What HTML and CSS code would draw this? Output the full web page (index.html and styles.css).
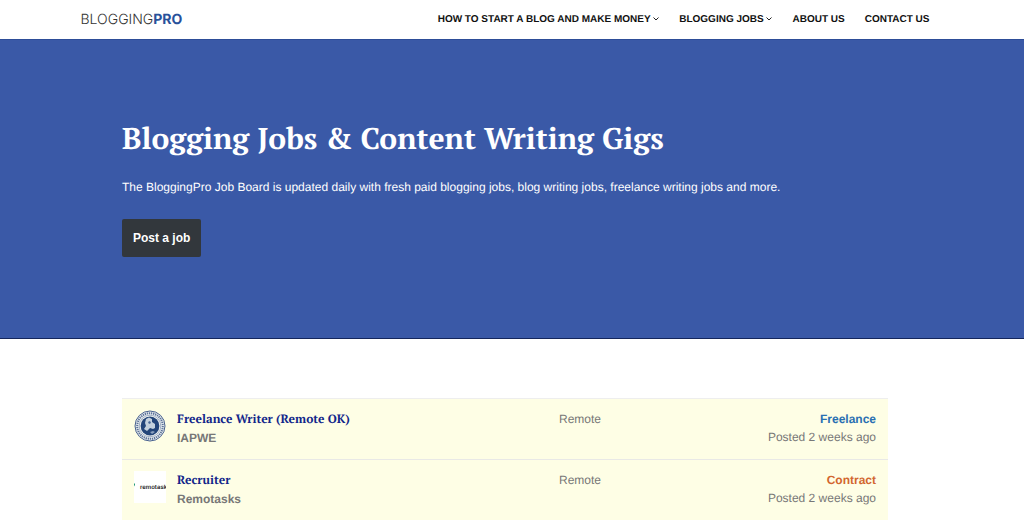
FILE: index.html
```html
<!DOCTYPE html>
<html lang="en">

<head>
    <meta charset="UTF-8">
    <meta name="viewport" content="width=device-width, initial-scale=1.0">
    <title>Blogging Jobs &amp; Content Writing Gigs</title>
    <link rel="stylesheet" href="styles.css">
</head>

<body>
    <header class="site-header">
        <div class="header-inner">
            <a href="#" class="logo">BLOGGING<strong>PRO</strong></a>
            <nav class="main-nav">
                <a href="#">HOW TO START A BLOG AND MAKE MONEY
                    <svg class="arrow" viewBox="0 0 6 4"><path d="M0.5 0.5 L3 3 L5.5 0.5" /></svg></a>
                <a href="#">BLOGGING JOBS
                    <svg class="arrow" viewBox="0 0 6 4"><path d="M0.5 0.5 L3 3 L5.5 0.5" /></svg></a>
                <a href="#">ABOUT US</a>
                <a href="#">CONTACT US</a>
            </nav>
        </div>
    </header>

    <section class="hero">
        <div class="container">
            <h1>Blogging Jobs &amp; Content Writing Gigs</h1>
            <p>The BloggingPro Job Board is updated daily with fresh paid blogging jobs, blog writing jobs, freelance writing jobs and more.</p>
            <button type="button" class="post-btn">Post a job</button>
        </div>
    </section>

    <main class="jobs">
        <ul class="job-list container">
            <li class="job">
                <!-- IAPWE globe seal -->
                <svg class="job-logo" viewBox="0 0 32 32">
                    <circle cx="16" cy="16" r="15" fill="#e9eef0" stroke="#48618e" />
                    <circle cx="16" cy="16" r="12.8" fill="none" stroke="#5d7399" stroke-width="2" stroke-dasharray="1.3 0.8" />
                    <circle cx="16" cy="16" r="10.8" fill="#f2f5f3" stroke="#6f83a6" stroke-width="0.6" />
                    <circle cx="16" cy="16" r="9.4" fill="#234579" />
                    <path d="M12 9 L15 7.5 L18 9 L18 12 L21 14 L21 18 L19 19 L16 18 L13 21 L10 19 L12 16 L11 13 Z" fill="#c4d1dd" />
                    <path d="M14 12 L16 11 L17 13 L15 14 Z" fill="#4a6896" />
                    <path d="M16 22 L19 21 L21 22 L18 24 Z" fill="#8ba0bd" />
                </svg>
                <div class="position">
                    <h3><a href="#">Freelance Writer (Remote OK)</a></h3>
                    <strong>IAPWE</strong>
                </div>
                <div class="location">Remote</div>
                <div class="meta">
                    <div class="type freelance">Freelance</div>
                    <div>Posted 2 weeks ago</div>
                </div>
            </li>
            <li class="job">
                <svg class="job-logo" viewBox="0 0 32 32">
                    <rect width="32" height="32" fill="#fff" />
                    <path d="M0 12.5 H1 V14 L0 15.5 Z" fill="#269b79" />
                    <text class="logo-text" x="6" y="18">remotask</text>
                </svg>
                <div class="position">
                    <h3><a href="#">Recruiter</a></h3>
                    <strong>Remotasks</strong>
                </div>
                <div class="location">Remote</div>
                <div class="meta">
                    <div class="type contract">Contract</div>
                    <div>Posted 2 weeks ago</div>
                </div>
            </li>
        </ul>
    </main>
</body>

</html>
```
FILE: styles.css
```css
* {
    box-sizing: border-box;
}

body {
    margin: 0;
    font-family: "Liberation Sans", Arial, sans-serif;
    font-size: 12px;
    line-height: 18px;
    text-rendering: geometricPrecision;
    color: #777;
    background-color: #fff;
}

a {
    text-decoration: none;
}

/* header */
.site-header {
    padding-right: 14px;
}

.header-inner {
    display: flex;
    align-items: center;
    justify-content: space-between;
    max-width: 849px;
    height: 39px;
    padding-top: 1px;
    margin: 0 auto;
}

.logo {
    font-family: Inter, sans-serif;
    font-size: 14px;
    font-weight: 300;
    color: #333;
}

.logo strong {
    font-weight: 700;
    color: #28519b;
}

.main-nav {
    display: flex;
    gap: 20px;
}

.main-nav a {
    font-size: 10px;
    font-weight: bold;
    color: #111;
}

.arrow {
    width: 6px;
    height: 4px;
    margin-bottom: 1px;
    fill: none;
    stroke: #222;
}

.container {
    max-width: 766px;
    margin: 0 auto;
}

/* hero */
.hero {
    padding: 80px 14px 81px 0;
    background-color: #3a59a7;
    border-top: 1px solid #2d4d98;
    border-bottom: 1px solid #14265c;
    color: #fff;
}

.hero h1 {
    margin: 0 0 22px;
    font-family: "PT Serif", "Liberation Serif", serif;
    font-size: 30px;
    line-height: 36px;
}

.hero p {
    margin: 0 0 23px;
}

.post-btn {
    display: block;
    height: 38px;
    padding: 0 11px;
    border: 0;
    border-radius: 2px;
    background-color: #32373c;
    color: #fff;
    font-family: inherit;
    font-size: 12px;
    font-weight: bold;
}

/* job listings */
.jobs {
    padding: 59px 14px 0 0;
}

.job-list {
    padding: 0;
    list-style: none;
    border-top: 1px solid #eee;
}

.job {
    display: grid;
    grid-template-columns: 32px 1fr 162px 155px;
    padding: 11px 12px 12px;
    background-color: #fefee5;
    border-bottom: 1px solid #e9e9e6;
}

.job-logo {
    width: 32px;
    height: 32px;
}

.logo-text {
    font-family: Inter, sans-serif;
    font-size: 6px;
    font-weight: 600;
    fill: #222;
}

.position {
    padding-left: 11px;
}

.position h3 {
    margin: 0;
    font-family: "PT Serif", "Liberation Serif", serif;
    font-size: 12px;
    line-height: 19px;
}

.position h3 a {
    color: #12268a;
}

.meta {
    text-align: right;
}

.type {
    font-weight: bold;
}

.freelance {
    color: #2a70b2;
}

.contract {
    color: #d2662f;
}
```
